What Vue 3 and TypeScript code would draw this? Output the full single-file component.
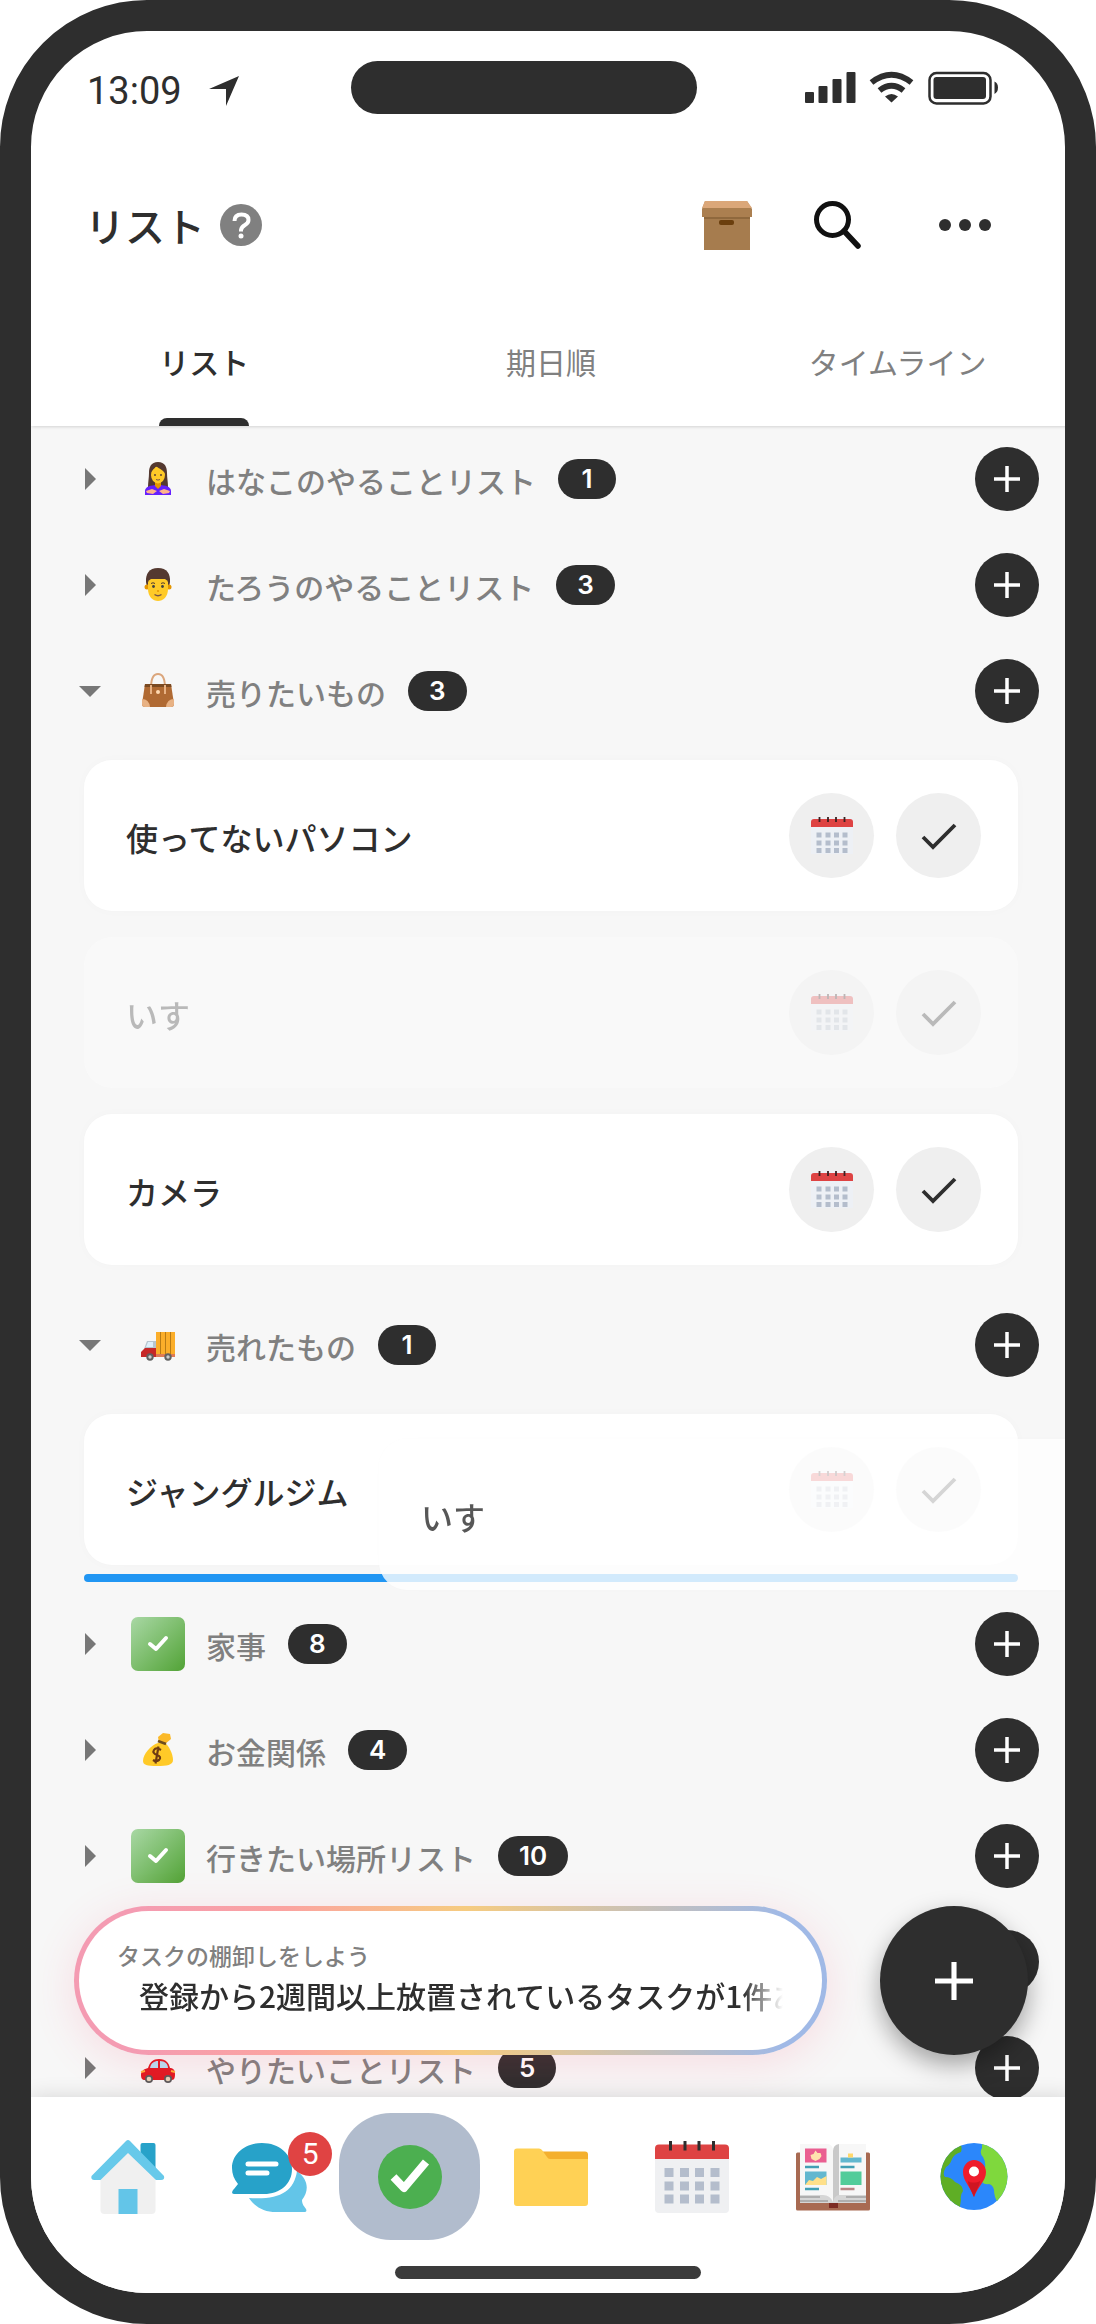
<script setup lang="ts">
import { ref } from 'vue'

interface Task {
  title: string
  dragging?: boolean
}

interface TaskList {
  id: string
  name: string
  icon: string
  count: number
  open?: boolean
  tasks?: Task[]
  dropped?: string
}

interface NavItem {
  id: string
  label: string
  badge?: number
}

const tabs = ['リスト', '期日順', 'タイムライン']
const activeTab = ref(0)

const lists = ref<TaskList[]>([
  { id: 'hanako', name: 'はなこのやることリスト', icon: 'woman', count: 1 },
  { id: 'taro', name: 'たろうのやることリスト', icon: 'man', count: 3 },
  {
    id: 'sell',
    name: '売りたいもの',
    icon: 'bag',
    count: 3,
    open: true,
    tasks: [{ title: '使ってないパソコン' }, { title: 'いす', dragging: true }, { title: 'カメラ' }],
  },
  {
    id: 'sold',
    name: '売れたもの',
    icon: 'truck',
    count: 1,
    open: true,
    tasks: [{ title: 'ジャングルジム' }],
    dropped: 'いす',
  },
  { id: 'chores', name: '家事', icon: 'done', count: 8 },
  { id: 'money', name: 'お金関係', icon: 'money', count: 4 },
  { id: 'places', name: '行きたい場所リスト', icon: 'done', count: 10 },
  { id: 'shopping', name: '', icon: '', count: 0 },
  { id: 'wish', name: 'やりたいことリスト', icon: 'car', count: 5 },
])

const navItems: NavItem[] = [
  { id: 'home', label: 'ホーム' },
  { id: 'chat', label: 'チャット', badge: 5 },
  { id: 'tasks', label: 'タスク' },
  { id: 'folder', label: 'フォルダ' },
  { id: 'calendar', label: 'カレンダー' },
  { id: 'album', label: 'アルバム' },
  { id: 'map', label: 'マップ' },
]
const activeNav = ref('tasks')

function toggle(list: TaskList) {
  list.open = !list.open
}
</script>

<template>
  <svg class="sprite" aria-hidden="true">
    <defs>
      <linearGradient id="grad-done" x1="0" y1="0" x2="1" y2="1">
        <stop offset="0" stop-color="#a9d8a5" />
        <stop offset="1" stop-color="#52a336" />
      </linearGradient>
      <clipPath id="clip-globe"><circle cx="38" cy="37.500" r="33.500" /></clipPath>

      <symbol id="i-plus" viewBox="0 0 26 26">
        <path d="M13 0v26M0 13h26" stroke="#fff" stroke-width="3.500" fill="none" />
      </symbol>
      <symbol id="i-check" viewBox="0 0 36 28">
        <path d="M2 15l10 10L34 3" fill="none" stroke="#2e2e2e" stroke-width="3.800" />
      </symbol>

      <symbol id="i-woman" viewBox="0 0 36 36">
        <path d="M18 1C11 1 9 6 9 12c0 5-1 9-1 14h20c0-5-1-9-1-14 0-6-2-11-9-11z" fill="#543930" />
        <path d="M5 34v-4c0-4 5-6 13-6s13 2 13 6v4z" fill="#651fff" />
        <path d="M15 20h6v5l-3 3-3-3z" fill="#e59600" />
        <ellipse cx="18" cy="14" rx="7" ry="8.500" fill="#ffca28" />
        <path d="M10 14c1-5 5-6 6-9 3 3 8 4 10 9 0-6-2-10-8-10s-8 5-8 10z" fill="#543930" />
        <circle cx="15" cy="14" r="1" fill="#5d4037" />
        <circle cx="21" cy="14" r="1" fill="#5d4037" />
        <path d="M16 18.500q2 1.200 4 0" stroke="#795548" fill="none" />
        <path d="M6 30l6-2 5 2-4 3-6-1zM30 30l-6-2-5 2 4 3 6-1z" fill="#ffb38a" />
      </symbol>
      <symbol id="i-man" viewBox="0 0 36 36">
        <path d="M18 1C9 1 5.500 7 6 15l1 5h22l1-5C30.500 7 27 1 18 1z" fill="#543930" />
        <circle cx="7" cy="20" r="2.500" fill="#e59600" />
        <circle cx="29" cy="20" r="2.500" fill="#e59600" />
        <path d="M8 15q1-2 3-3h14q2 1 3 3v7c0 8-5 12-10 12S8 30 8 22z" fill="#ffca28" />
        <circle cx="13.500" cy="19.500" r="1.400" fill="#404040" />
        <circle cx="22.500" cy="19.500" r="1.400" fill="#404040" />
        <path d="M11 16.500q2-1.500 4 0M21 16.500q2-1.500 4 0" stroke="#543930" fill="none" />
        <path d="M14.500 27.500q3.500 2.500 7 0" stroke="#795548" stroke-width="1.500" fill="none" />
        <path d="M17 24h2" stroke="#e59600" stroke-width="1.500" />
      </symbol>
      <symbol id="i-bag" viewBox="0 0 36 36">
        <path d="M11 15C11 5 14 1 18 1s7 4 7 14" fill="none" stroke="#dba67c" stroke-width="2" />
        <path d="M5 11h26l3 20q0 3-3 3H5q-3 0-3-3z" fill="#b06a33" />
        <path d="M5 11h26l.500 3h-27z" fill="#7b4a22" />
        <path d="M2 26q7 0 8 8H5q-3 0-3-3zM34 26q-7 0-8 8h5q3 0 3-3z" fill="#e8b284" />
        <path d="M11 12v9M25 12v9" stroke="#e8b284" stroke-width="2" />
        <circle cx="18" cy="19" r="2" fill="#ffd9b0" />
      </symbol>
      <symbol id="i-truck" viewBox="0 0 36 36">
        <path d="M16 5h19v24H16z" fill="#fbae2a" />
        <path d="M20.500 5v22M25.500 5v22M30.500 5v22" stroke="#b87b16" stroke-width="1" />
        <path d="M15 27h20v3H15z" fill="#e07b55" />
        <path d="M7 14h9v8H4z" fill="#b7c6cf" />
        <path d="M8 15h5v5H6z" fill="#dff0fb" />
        <path d="M1 25l4-4h11v9H1z" fill="#c62828" />
        <circle cx="10" cy="30" r="3.700" fill="#616161" />
        <circle cx="10" cy="30" r="1.700" fill="#ccc" />
        <circle cx="28" cy="30" r="3.700" fill="#616161" />
        <circle cx="28" cy="30" r="1.700" fill="#ccc" />
      </symbol>
      <symbol id="i-money" viewBox="0 0 36 36">
        <path d="M19 10l-1-5 5-4 7 1 1 5-6 5z" fill="#fbb928" />
        <path d="M18 11c-7 2-15 11-15 18 0 4 4 5 14 5s16-1 16-6c0-6-4-14-8-17z" fill="#ffca28" />
        <path d="M18 9l8 3" stroke="#6d4c1f" stroke-width="2.500" />
        <path d="M21 18q-5-3-7 0t3 5 2 5q-3 2-6 0M18.500 14.500l-3 17" stroke="#6d3b13" stroke-width="2.200" fill="none" />
      </symbol>
      <symbol id="i-car" viewBox="0 0 36 36">
        <path d="M1 25c0-4 3-6 7-7 2-6 5-9 11-9 7 0 10 4 11 9 3 0 5 2 5 6 0 5-1 6-4 6H5c-3 0-4-2-4-5z" fill="#e01921" />
        <path d="M10 18c1-5 4-7 8-7v7zM20 11c5 0 8 3 8 7h-8z" fill="#b5e0f5" />
        <circle cx="9" cy="29" r="4" fill="#5b5b5b" />
        <circle cx="9" cy="29" r="2.300" fill="#e5d5bb" />
        <circle cx="28" cy="29" r="4" fill="#5b5b5b" />
        <circle cx="28" cy="29" r="2.300" fill="#e5d5bb" />
        <path d="M1 22l4-1M31 21l4 1" stroke="#ffb03a" stroke-width="2" />
      </symbol>
      <symbol id="i-done" viewBox="0 0 54 54">
        <rect width="54" height="54" rx="7" fill="url(#grad-done)" />
        <path d="M19 27l6 5 10-11" fill="none" stroke="#fff" stroke-width="4" stroke-linecap="round" stroke-linejoin="round" />
      </symbol>

      <symbol id="i-home" viewBox="0 0 76 76">
        <path d="M50.500 6q0-2 2-2h11q2 0 2 2v24H50.500z" fill="#27a2c9" />
        <path d="M38 12l27.500 27v32q0 4-4 4h-47q-4 0-4-4V39z" fill="#f0f0f0" />
        <path d="M28.500 50h19v25h-19z" fill="#63c5e8" />
        <path d="M36 2q2-2 4 0l34 35q1 4-3 4h-5L38 14 10.500 41h-6q-4 0-3-4z" fill="#67c9ea" />
      </symbol>
      <symbol id="i-chat" viewBox="0 0 76 76">
        <path d="M66 32c12 9 12 20 5 29 0 5 3 7 4 9s0 3-2 3H45c-12 0-21-5-27-14 30 2 45-6 48-27z" fill="#63c5e8" />
        <path d="M31 4c17 0 30 11 30 26S49 55 33 55H3c-3 0-2-3 0-5l4-5C3 40 1 35 1 29 1 15 14 4 31 4z" fill="#27a2c9" />
        <path d="M17 25h28M17 34h19" stroke="#fff" stroke-width="5" stroke-linecap="round" />
      </symbol>
      <symbol id="i-tasks" viewBox="0 0 76 76">
        <circle cx="38" cy="38" r="32" fill="#4caf50" />
        <path d="M21.500 38L32 49l22-26" fill="none" stroke="#fff" stroke-width="8" stroke-linejoin="round" />
      </symbol>
      <symbol id="i-folder" viewBox="0 0 76 76">
        <path d="M20 12.500h52q3 0 3 3V40H20z" fill="#f4b02e" />
        <path d="M1 12.500q0-3 3-3h22q2 0 3 1.500l5 7q1 2 3 2h38V64q0 3-3 3H4q-3 0-3-3z" fill="#ffd155" />
      </symbol>
      <symbol id="i-calendar" viewBox="0 0 76 76">
        <path d="M1 14h74v56q0 4-4 4H5q-4 0-4-4z" fill="#eff0f2" />
        <path d="M1 20V9.500q0-4 4-4h66q4 0 4 4V20z" fill="#de4343" />
        <path d="M16.500 2v9.500M31 2v9.500M45 2v9.500M59.500 2v9.500" stroke="#2e2e2e" stroke-width="3" />
        <path
          d="M10.500 29h9v9h-9zM26 29h9v9h-9zM41 29h9v9h-9zM56.500 29h9v9h-9zM10.500 42.500h9v9h-9zM26 42.500h9v9h-9zM41 42.500h9v9h-9zM56.500 42.500h9v9h-9zM10.500 55.500h9v9h-9zM26 55.500h9v9h-9zM41 55.500h9v9h-9zM56.500 55.500h9v9h-9z"
          fill="#b4bdcc"
        />
      </symbol>
      <symbol id="i-calendar-small" viewBox="0 0 44 40">
        <path d="M1 2h42v36H1z" fill="#edf0f5" />
        <path d="M1 11V6q0-3 3-3h36q3 0 3 3v5z" fill="#de4343" />
        <path d="M9.500 1v5M18 1v5M26 1v5M34.500 1v5" stroke="#3a2020" stroke-width="1.800" />
        <path
          d="M6.500 16.500h5v5h-5zM15.500 16.500h5v5h-5zM24 16.500h5v5h-5zM32.500 16.500h5v5h-5zM6.500 24.500h5v5h-5zM15.500 24.500h5v5h-5zM24 24.500h5v5h-5zM32.500 24.500h5v5h-5zM6.500 32h5v5h-5zM15.500 32h5v5h-5zM24 32h5v5h-5zM32.500 32h5v5h-5z"
          fill="#b4bdcc"
        />
      </symbol>
      <symbol id="i-album" viewBox="0 0 76 76">
        <rect x="1" y="13.500" width="74" height="58" rx="1.500" fill="#a86a52" />
        <path d="M5 55h66v9H5z" fill="#d6d6d6" />
        <path d="M5 58h20M5 62h28M71 58H51M71 62H43" stroke="#a3a3a3" stroke-width="1.500" />
        <path d="M5 5h29q4 2 4 6v52q-3-7-10-7H5z" fill="#f7f7f7" />
        <path d="M38 63V12q0-6 6-7v51q-5 1-6 7z" fill="#c9c9c9" />
        <path d="M44 5h27v51H44z" fill="#f7f7f7" />
        <path d="M10 9.500h21.500v14H10z" fill="#ea5f91" />
        <path d="M20.500 11.500l2 2.500 3 0 1 3-2 3-4 2-4-2-1-4 3-1z" fill="#ffe3ae" />
        <path d="M10 28h14M45.500 28h14M10 50h14" stroke="#419fb4" stroke-width="2.500" />
        <path d="M10 32.500h21.500V46H10z" fill="#62b7cf" />
        <path d="M10 46l4-5 4 1 4-4 4 2 5.500-3v9z" fill="#ffe08a" />
        <path d="M45.500 18.500h21v5h-21z" fill="#62b7cf" />
        <path d="M53 14.500h5v4h-5z" fill="#ffd76a" />
        <path d="M45.500 32.500h21V46h-21z" fill="#52cc9a" />
        <path d="M45.500 50h14" stroke="#b98585" stroke-width="2.500" />
        <path d="M34 64h9v5h-9z" fill="#7d2c24" />
      </symbol>
      <symbol id="i-map" viewBox="0 0 76 76">
        <g clip-path="url(#clip-globe)">
          <path d="M0 0h76v76H0z" fill="#2b87fb" />
          <path d="M6 0h16q5 7 3 13-7 2-9 7-2 6-6 8-4 7-1 10 6 0 10 5 8 3 8 9-3 4-2 9l-2 12-8-3q0-8-5-14L0 48V0z" fill="#5fae25" />
          <path d="M46 0h30v40q0 10-7 14-5 5-7 10-4-6-4-13-1-5-5-6-8 1-8-6 0-6 4-10 1-6-2-11-4-4-1-9z" fill="#7fd83d" />
        </g>
        <path d="M38 58C34 47 27 42 27 33c0-7 5-12 11-12s12 5 12 12c0 9-8 14-12 25z" fill="#ef1c2c" />
        <path d="M38 58c-3-7-6-12-6-16 2 2 9 2 12 0 0 4-4 9-6 16z" fill="#cf1522" />
        <circle cx="38" cy="32.500" r="5" fill="#fff" />
      </symbol>
    </defs>
  </svg>

  <div class="phone">
    <div class="status">
      <div class="status-left">
        <span>13:09</span>
        <svg width="30" height="30" viewBox="0 0 30 30" aria-hidden="true">
          <path d="M30 0L17 30V13H0z" fill="#2e2e2e" />
        </svg>
      </div>
      <div class="island"></div>
      <svg class="status-right" width="194" height="34" viewBox="0 0 194 34" aria-hidden="true">
        <g fill="#2e2e2e">
          <rect x="1" y="21" width="9" height="11" rx="1" />
          <rect x="14.500" y="15" width="9" height="17" rx="1" />
          <rect x="28.500" y="8" width="9" height="24" rx="1" />
          <rect x="42.500" y="1" width="9" height="31" rx="1" />
          <path d="M81 25.500q6.500-5 13 0l-6.500 6z" />
          <path d="M190.500 10.500q3.500 1.500 3.500 6t-3.500 6.500z" />
          <rect x="129.500" y="6" width="52.500" height="22" rx="3" />
        </g>
        <g fill="none" stroke="#2e2e2e">
          <path d="M67.500 11.500Q87.500-4 107.500 11.500M75.500 19.500Q87.500 10 99.500 19.500" stroke-width="6" />
          <rect x="125.500" y="2" width="61" height="30.500" rx="7" stroke-width="2.500" />
        </g>
      </svg>
    </div>

    <div class="app">
      <header class="header">
        <h1>リスト</h1>
        <button class="icon-btn help" type="button" aria-label="ヘルプ">
          <svg width="42" height="42" viewBox="0 0 42 42">
            <circle cx="21" cy="21" r="21" fill="#808080" />
            <path d="M14.500 17q0-6.500 7-6.500t7 5.500q0 3-3.500 5t-4 5v1.500" fill="none" stroke="#fff" stroke-width="4" />
            <circle cx="21" cy="32" r="2.500" fill="#fff" />
          </svg>
        </button>
        <div class="actions">
          <button class="icon-btn" type="button" aria-label="アーカイブ">
            <svg width="52" height="50" viewBox="0 0 52 50">
              <path d="M3 10h46v40H3z" fill="#a67c4e" />
              <path d="M3 16h46v3H3z" fill="#8f683d" />
              <path d="M4 1h42l5 8v8H1V9z" fill="#ab7f50" />
              <path d="M4 1h42l5 7H1z" fill="#dba779" />
              <rect x="18" y="20" width="15" height="5" rx="2" fill="#6b3f0e" />
            </svg>
          </button>
          <button class="icon-btn" type="button" aria-label="検索">
            <svg width="52" height="50" viewBox="0 0 52 50">
              <circle cx="20.500" cy="19.500" r="16" fill="none" stroke="#111" stroke-width="5" />
              <path d="M32 31l14 15" stroke="#111" stroke-width="5.500" stroke-linecap="round" />
            </svg>
          </button>
          <button class="icon-btn more" type="button" aria-label="メニュー">
            <svg width="52" height="12" viewBox="0 0 52 12" fill="#2e2e2e">
              <circle cx="6" cy="6" r="6" />
              <circle cx="26" cy="6" r="6" />
              <circle cx="46" cy="6" r="6" />
            </svg>
          </button>
        </div>
      </header>

      <div class="tabs" role="tablist">
        <button
          v-for="(tab, i) in tabs"
          :key="tab"
          type="button"
          role="tab"
          class="tab"
          :class="{ active: activeTab === i }"
          :aria-selected="activeTab === i"
          @click="activeTab = i"
        >
          <span>{{ tab }}</span>
        </button>
      </div>

      <main class="board">
        <section v-for="list in lists" :key="list.id" class="group">
          <div class="row">
            <button v-if="list.name" type="button" class="toggle" :aria-expanded="!!list.open" @click="toggle(list)">
              <svg class="arrow" :class="{ open: list.open }" width="22" height="22" viewBox="0 0 22 22" aria-hidden="true">
                <path d="M6 0l11 11L6 22z" fill="#777" />
              </svg>
              <span class="emoji" aria-hidden="true">
                <svg :class="{ full: list.icon === 'done' }"><use :href="'#i-' + list.icon" /></svg>
              </span>
              <span class="name">{{ list.name }}</span>
              <span class="count">{{ list.count }}</span>
            </button>
            <button type="button" class="add" :aria-label="list.name + 'に追加'">
              <svg width="26" height="26"><use href="#i-plus" /></svg>
            </button>
          </div>

          <div v-if="list.open" class="cards" :class="{ dropping: list.dropped }">
            <article v-for="task in list.tasks" :key="task.title" class="card" :class="{ dragging: task.dragging }">
              <h2>{{ task.title }}</h2>
              <button type="button" class="round" aria-label="期日">
                <svg width="44" height="40"><use href="#i-calendar-small" /></svg>
              </button>
              <button type="button" class="round" aria-label="完了">
                <svg width="36" height="28"><use href="#i-check" /></svg>
              </button>
            </article>
            <div v-if="list.dropped" class="drop-line"></div>
            <div v-if="list.dropped" class="card ghost">
              <h2>{{ list.dropped }}</h2>
            </div>
          </div>
        </section>

        <div class="dock">
          <a href="#review" class="notice">
            <span class="notice-title">タスクの棚卸しをしよう</span>
            <span class="notice-text">登録から2週間以上放置されているタスクが1件あります</span>
          </a>
          <button type="button" class="fab" aria-label="タスクを追加">
            <svg width="38" height="38"><use href="#i-plus" /></svg>
          </button>
        </div>
      </main>

      <nav class="nav">
        <button
          v-for="item in navItems"
          :key="item.id"
          type="button"
          class="nav-item"
          :class="{ active: activeNav === item.id }"
          :aria-label="item.label"
          @click="activeNav = item.id"
        >
          <svg width="76" height="76"><use :href="'#i-' + item.id" /></svg>
          <span v-if="item.badge" class="nav-badge">{{ item.badge }}</span>
        </button>
      </nav>
    </div>

    <div class="home-area"><div class="home-bar"></div></div>
  </div>
</template>

<style>
body {
  margin: 0;
  background: #fff;
}
</style>

<style scoped>
.sprite {
  position: absolute;
  width: 0;
  height: 0;
}
.phone {
  box-sizing: border-box;
  height: 100vh;
  border: 31px solid #2e2e2e;
  border-radius: 147px;
  overflow: hidden;
  display: flex;
  flex-direction: column;
  background: #fff;
  color: #2e2e2e;
  font-family: 'Noto Sans CJK JP', 'Noto Sans', sans-serif;
}
button {
  border: 0;
  padding: 0;
  margin: 0;
  background: none;
  color: inherit;
  font: inherit;
  cursor: pointer;
}
svg {
  display: block;
}
h1,
h2 {
  margin: 0;
}

.status {
  flex: none;
  box-sizing: border-box;
  height: 119px;
  padding: 30px 67px 0 56px;
  display: flex;
  align-items: flex-start;
}
.status-left {
  width: 264px;
  height: 53px;
  padding-top: 6px;
  box-sizing: border-box;
  display: flex;
  align-items: center;
  gap: 27px;
  font: 400 38px/1 Roboto, sans-serif;
}
.island {
  width: 346px;
  height: 53px;
  border-radius: 27px;
  background: #2e2e2e;
}
.status-right {
  margin: 10px 0 0 auto;
}

.app {
  flex: 1;
  min-height: 0;
  margin-right: -6px;
  display: flex;
  flex-direction: column;
}
.header {
  flex: none;
  height: 150px;
  padding: 0 64px 0 54px;
  display: flex;
  align-items: center;
}
h1 {
  font-size: 40px;
  line-height: 60px;
  font-weight: 500;
}
.icon-btn {
  display: flex;
  align-items: center;
  justify-content: center;
}
.help {
  margin-left: 15px;
}
.actions {
  margin-left: auto;
  display: flex;
  align-items: center;
  gap: 59px;
}
.more {
  width: 84px;
  height: 52px;
}

.tabs {
  flex: none;
  height: 126px;
  display: flex;
  box-shadow: 0 2px 3px -1px rgba(0, 0, 0, 0.15);
  position: relative;
  z-index: 1;
}
.tab {
  flex: 1;
  display: flex;
  justify-content: center;
  color: #808080;
  font-size: 30px;
  font-weight: 400;
}
.tab span {
  position: relative;
  height: 126px;
  line-height: 122px;
}
.tab.active {
  color: #2e2e2e;
  font-weight: 500;
}
.tab.active span::after {
  content: '';
  position: absolute;
  left: 0;
  right: 0;
  bottom: 0;
  height: 8px;
  border-radius: 8px 8px 0 0;
  background: #2e2e2e;
}

.board {
  flex: 1;
  min-height: 0;
  overflow: hidden;
  position: relative;
  background: #f7f7f7;
}
.row {
  height: 106px;
  padding: 0 32px 0 48px;
  display: flex;
  align-items: center;
}
.toggle {
  display: flex;
  align-items: center;
}
.arrow.open {
  transform: rotate(90deg);
}
.emoji {
  width: 54px;
  height: 54px;
  margin: 0 21px 0 30px;
  display: flex;
  align-items: center;
  justify-content: center;
}
.emoji svg {
  width: 36px;
  height: 36px;
}
.emoji svg.full {
  width: 54px;
  height: 54px;
}
.name {
  padding-top: 2px;
  font-size: 30px;
  line-height: 44px;
  font-weight: 500;
  color: #808080;
}
.count {
  box-sizing: border-box;
  min-width: 58px;
  height: 40px;
  margin-left: 22px;
  padding: 0 21px;
  border-radius: 20px;
  background: #2e2e2e;
  color: #fff;
  font: 600 26px/40px Inter, sans-serif;
  text-align: center;
}
.add {
  width: 64px;
  height: 64px;
  margin-left: auto;
  border-radius: 50%;
  background: #2e2e2e;
  display: flex;
  align-items: center;
  justify-content: center;
}

.cards {
  position: relative;
  padding: 16px 53px 27px;
  display: flex;
  flex-direction: column;
  gap: 26px;
}
.card {
  box-sizing: border-box;
  height: 151px;
  padding: 0 37px 0 42px;
  border-radius: 28px;
  background: #fff;
  box-shadow: 0 0 12px rgba(0, 0, 0, 0.02);
  display: flex;
  align-items: center;
  gap: 22px;
}
.card h2 {
  flex: 1;
  padding-top: 2px;
  font-size: 32px;
  line-height: 48px;
  font-weight: 500;
}
.card.dragging {
  opacity: 0.3;
}
.round {
  width: 85px;
  height: 85px;
  border-radius: 50%;
  background: #efefef;
  display: flex;
  align-items: center;
  justify-content: center;
}
.cards.dropping {
  padding-bottom: 9px;
  gap: 9px;
}
.drop-line {
  height: 8px;
  border-radius: 4px;
  background: #2196f3;
}
/* The card under the pointer while it is being dragged */
.ghost {
  position: absolute;
  top: 41px;
  left: 348px;
  width: calc(100% - 106px);
  opacity: 0.8;
}

.dock {
  position: absolute;
  left: 43px;
  right: 43px;
  bottom: 42px;
  display: flex;
  gap: 53px;
}
.notice {
  box-sizing: border-box;
  flex: 1;
  min-width: 0;
  height: 149px;
  padding: 0 39px 8px 38px;
  border: 5px solid transparent;
  border-radius: 75px;
  background:
    linear-gradient(#fff, #fff) padding-box,
    linear-gradient(90deg, #f49bb2 8%, #fba3a0 28%, #f6cb80 52%, #c3bfbd 78%, #a0b9e6 94%) border-box;
  box-shadow: 0 8px 44px rgba(255, 70, 110, 0.15);
  color: inherit;
  text-decoration: none;
  display: flex;
  flex-direction: column;
  justify-content: center;
}
.notice-title {
  font-size: 23px;
  line-height: 36px;
  font-weight: 500;
  color: #808080;
}
.notice-text {
  overflow: hidden;
  white-space: nowrap;
  padding-left: 22px;
  font-size: 30px;
  line-height: 44px;
  font-weight: 500;
  mask-image: linear-gradient(90deg, #000 calc(100% - 40px), transparent);
}
.fab {
  flex: none;
  width: 148px;
  height: 149px;
  border-radius: 50%;
  background: #2e2e2e;
  box-shadow: 0 10px 24px rgba(0, 0, 0, 0.35);
  display: flex;
  align-items: center;
  justify-content: center;
}

.nav {
  flex: none;
  position: relative;
  padding: 16px 26px 0;
  display: flex;
  background: #fff;
  box-shadow: 0 0 20px rgba(0, 0, 0, 0.14);
}
.nav-item {
  flex: 1;
  position: relative;
  height: 127px;
  border-radius: 52px;
  display: flex;
  align-items: center;
  justify-content: center;
}
.nav-item.active {
  background: #b1bccd;
}
.nav-badge {
  position: absolute;
  top: 19px;
  right: 7px;
  width: 44px;
  height: 44px;
  border-radius: 50%;
  background: #e04343;
  color: #fff;
  font: 400 30px/44px Roboto, sans-serif;
  text-align: center;
}
.home-area {
  flex: none;
  position: relative;
  padding: 26px 0 14px;
  background: #fff;
}
.home-bar {
  width: 306px;
  height: 13px;
  margin: 0 auto;
  border-radius: 7px;
  background: #3b3b3b;
}
</style>
